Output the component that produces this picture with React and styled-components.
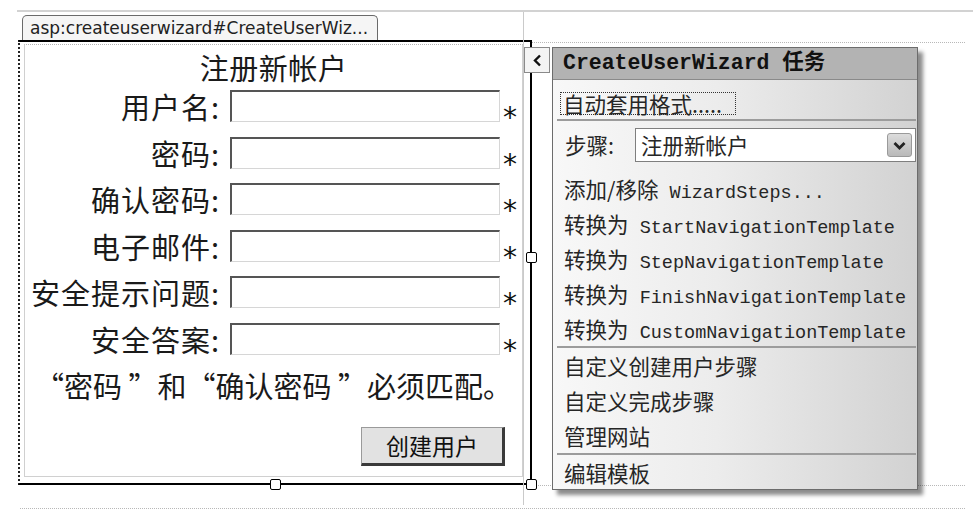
import React from "react";
import styled, { createGlobalStyle } from "styled-components";

const GlobalStyle = createGlobalStyle`
  html, body {
    margin: 0;
    padding: 0;
    background: #fff;
  }
  body {
    font-family: "Noto Sans CJK SC", "Liberation Sans", sans-serif;
    color: #1a1a1a;
  }
`;

const cjk = `"Noto Sans CJK SC", "Liberation Sans", sans-serif`;
const mono = `"Liberation Mono", "Noto Sans CJK SC", monospace`;

const Page = styled.div`
  position: relative;
  width: 973px;
  height: 525px;
  padding-top: 10px;
  box-sizing: border-box;
  overflow: hidden;
`;

const TopRule = styled.div`
  margin-left: 17px;
  height: 2px;
  background: #d2d2d2;
`;

const Row = styled.div`
  display: flex;
  align-items: flex-start;
  padding-left: 18px;
`;

const ControlWrap = styled.div`
  position: relative;
  flex: none;
  width: 514px;

  &::after {
    content: "";
    position: absolute;
    left: 505px;
    top: 0;
    bottom: -20px;
    width: 1px;
    background: #cacaca;
  }
`;

const Tab = styled.div`
  margin: 3px 0 0 4px;
  width: 356px;
  height: 25px;
  box-sizing: border-box;
  border: 1px solid #6a6a6a;
  border-bottom: none;
  border-radius: 5px 5px 0 0;
  background: #f5f5f5;
  padding-left: 7px;
  font-family: "DejaVu Sans", sans-serif;
  font-size: 17px;
  line-height: 24px;
  color: #222;
  white-space: nowrap;
  overflow: hidden;
`;

const Box = styled.div`
  position: relative;
  height: 445px;
  box-sizing: border-box;
  border: 2px solid #000;
  border-left: 2px dotted #222;
  padding: 2px 7px 6px 4px;
`;

const Inner = styled.div`
  height: 100%;
  box-sizing: border-box;
  border: 1px solid #d0d0d0;
  border-top: 1px dotted #b5b5b5;
  display: flex;
  flex-direction: column;
  padding-top: 7px;
  font-family: ${cjk};
`;

const Title = styled.div`
  text-align: center;
  font-size: 29px;
  line-height: 30px;
  letter-spacing: 0.5px;
`;

const FormGrid = styled.div`
  margin-top: 8px;
  display: grid;
  grid-template-columns: 205px 270px 1fr;
  grid-auto-rows: 32px;
  row-gap: 14.6px;
`;

const Label = styled.label`
  text-align: right;
  padding-right: 10px;
  font-size: 29px;
  line-height: 32px;
  letter-spacing: 1px;
  white-space: nowrap;
`;

const Field = styled.input`
  box-sizing: border-box;
  width: 270px;
  height: 32px;
  margin: 0;
  padding: 0 4px;
  border-top: 2px solid #555;
  border-left: 2px solid #555;
  border-right: 1px solid #d6d6d6;
  border-bottom: 1px solid #d6d6d6;
  background: #fff;
  outline: none;
`;

const Star = styled.span`
  margin-left: 3px;
  padding-top: 14px;
  font-family: "DejaVu Sans", sans-serif;
  font-size: 28px;
  line-height: 28px;
  color: #111;
`;

const Message = styled.div`
  margin-top: 15px;
  text-align: center;
  font-size: 29px;
  line-height: 30px;
`;

const ButtonRow = styled.div`
  display: flex;
  justify-content: flex-end;
  padding-right: 17px;
  margin-top: 27px;
`;

const CreateButton = styled.button`
  width: 144px;
  height: 39px;
  box-sizing: border-box;
  margin: 0;
  padding: 0;
  background: #e2e2e2;
  border: 1px solid #9a9a9a;
  border-right: 3px solid #3a3a3a;
  border-bottom: 3px solid #3a3a3a;
  font-family: ${cjk};
  font-size: 23px;
  color: #111;
`;

const Handle = styled.span`
  position: absolute;
  width: 11px;
  height: 11px;
  box-sizing: border-box;
  border: 1.5px solid #000;
  border-radius: 2px;
  background: #fff;
  ${(p) => p.$at === "right" && "right: -7px; top: 210px;"}
  ${(p) => p.$at === "bottom" && "left: 250px; bottom: -7px;"}
  ${(p) => p.$at === "corner" && "right: -7px; bottom: -7px;"}
`;

const RightFill = styled.div`
  flex: 1;
  margin: 30px 8px 0 0;
  height: 444px;
  box-sizing: border-box;
  border-top: 1px dotted #b8b8b8;
  border-bottom: 1px dotted #b8b8b8;
`;

const BottomRule = styled.div`
  margin: 22px 8px 0 20px;
  border-top: 1px dotted #b8b8b8;
`;

/* smart tag popup */
const TaskPopup = styled.div`
  position: absolute;
  left: 524px;
  top: 47px;
  display: flex;
  align-items: flex-start;
  gap: 2px;
`;

const Toggle = styled.div`
  width: 26px;
  height: 26px;
  box-sizing: border-box;
  border: 1px solid #8a8a8a;
  background: #f4f4f4;
  display: flex;
  align-items: center;
  justify-content: center;
`;

const Panel = styled.div`
  width: 366px;
  height: 443px;
  box-sizing: border-box;
  border: 1px solid #6c6c6c;
  background: linear-gradient(to right, #f8f8f8 0%, #ececec 45%, #d2d2d2 100%);
  box-shadow: 5px 5px 4px rgba(0, 0, 0, 0.45);
  display: flex;
  flex-direction: column;
  color: #262626;
`;

const PanelHeader = styled.div`
  height: 32px;
  box-sizing: border-box;
  background: #b3b3b3;
  border-bottom: 1px solid #8a8a8a;
  padding-left: 10px;
  font-family: ${mono};
  font-weight: bold;
  font-size: 21.5px;
  line-height: 31px;
  color: #111;
  white-space: nowrap;
`;

const PanelBody = styled.div`
  padding: 0 1px 0 4px;
  font-family: ${cjk};
  font-size: 21.5px;
`;

const AutoRow = styled.div`
  height: 39px;
  box-sizing: border-box;
  padding: 8px 0 0 3px;
`;

const AutoLink = styled.span`
  display: inline-block;
  height: 23px;
  box-sizing: border-box;
  border: 1px dotted #333;
  line-height: 21px;
  padding: 0 13px 0 2px;
  white-space: nowrap;
`;

const Separator = styled.div`
  height: 2px;
  background: #9c9c9c;
`;

const StepRow = styled.div`
  display: flex;
  align-items: center;
  height: 50px;
  box-sizing: border-box;
  padding: 7px 0 9px 0;
`;

const StepLabel = styled.span`
  width: 78px;
  padding-left: 8px;
  box-sizing: border-box;
  flex: none;
  line-height: 34px;
`;

const Select = styled.div`
  flex: 1;
  height: 34px;
  box-sizing: border-box;
  border: 1px solid #7f7f7f;
  background: #fff;
  display: flex;
  align-items: center;
  justify-content: space-between;
  padding: 0 3px 0 5px;
  line-height: 32px;
`;

const SelectArrow = styled.span`
  width: 25px;
  height: 24px;
  box-sizing: border-box;
  border: 1px solid #9a9a9a;
  border-radius: 3px;
  background: linear-gradient(#dcdcdc, #b9b9b9);
  display: flex;
  align-items: center;
  justify-content: center;
`;

const Item = styled.div`
  height: 35px;
  line-height: 35px;
  padding-left: 7px;
  white-space: nowrap;
`;

const Code = styled.span`
  font-family: ${mono};
  font-size: 18.5px;
  white-space: pre;
`;

const fields = ["用户名", "密码", "确认密码", "电子邮件", "安全提示问题", "安全答案"];

const templates = [
  "StartNavigationTemplate",
  "StepNavigationTemplate",
  "FinishNavigationTemplate",
  "CustomNavigationTemplate",
];

function App() {
  return (
    <>
      <GlobalStyle />
      <Page>
        <TopRule />
        <Row>
          <ControlWrap>
            <Tab>asp:createuserwizard#CreateUserWiz...</Tab>
            <Box>
              <Inner>
                <Title>注册新帐户</Title>
                <FormGrid>
                  {fields.map((f) => (
                    <React.Fragment key={f}>
                      <Label>{f}:</Label>
                      <Field type="text" readOnly />
                      <Star>*</Star>
                    </React.Fragment>
                  ))}
                </FormGrid>
                <Message>“密码 ”和“确认密码 ”必须匹配。</Message>
                <ButtonRow>
                  <CreateButton>创建用户</CreateButton>
                </ButtonRow>
              </Inner>
              <Handle $at="right" />
              <Handle $at="bottom" />
              <Handle $at="corner" />
            </Box>
          </ControlWrap>
          <RightFill />
        </Row>
        <BottomRule />

        <TaskPopup>
          <Toggle>
            <svg width="9" height="13" viewBox="0 0 9 13">
              <polyline
                points="7,1.5 2,6.5 7,11.5"
                fill="none"
                stroke="#111"
                strokeWidth="2.4"
              />
            </svg>
          </Toggle>
          <Panel>
            <PanelHeader>CreateUserWizard 任务</PanelHeader>
            <PanelBody>
              <AutoRow>
                <AutoLink>自动套用格式.....</AutoLink>
              </AutoRow>
              <Separator />
              <StepRow>
                <StepLabel>步骤:</StepLabel>
                <Select>
                  <span>注册新帐户</span>
                  <SelectArrow>
                    <svg width="13" height="9" viewBox="0 0 13 9">
                      <polyline
                        points="1.5,2 6.5,7 11.5,2"
                        fill="none"
                        stroke="#222"
                        strokeWidth="2.8"
                      />
                    </svg>
                  </SelectArrow>
                </Select>
              </StepRow>
              <Item>
                添加/移除<Code> WizardSteps...</Code>
              </Item>
              {templates.map((t) => (
                <Item key={t}>
                  转换为<Code> {t}</Code>
                </Item>
              ))}
              <Separator />
              <Item>自定义创建用户步骤</Item>
              <Item>自定义完成步骤</Item>
              <Item>管理网站</Item>
              <Separator />
              <Item>编辑模板</Item>
            </PanelBody>
          </Panel>
        </TaskPopup>
      </Page>
    </>
  );
}

export default App;
